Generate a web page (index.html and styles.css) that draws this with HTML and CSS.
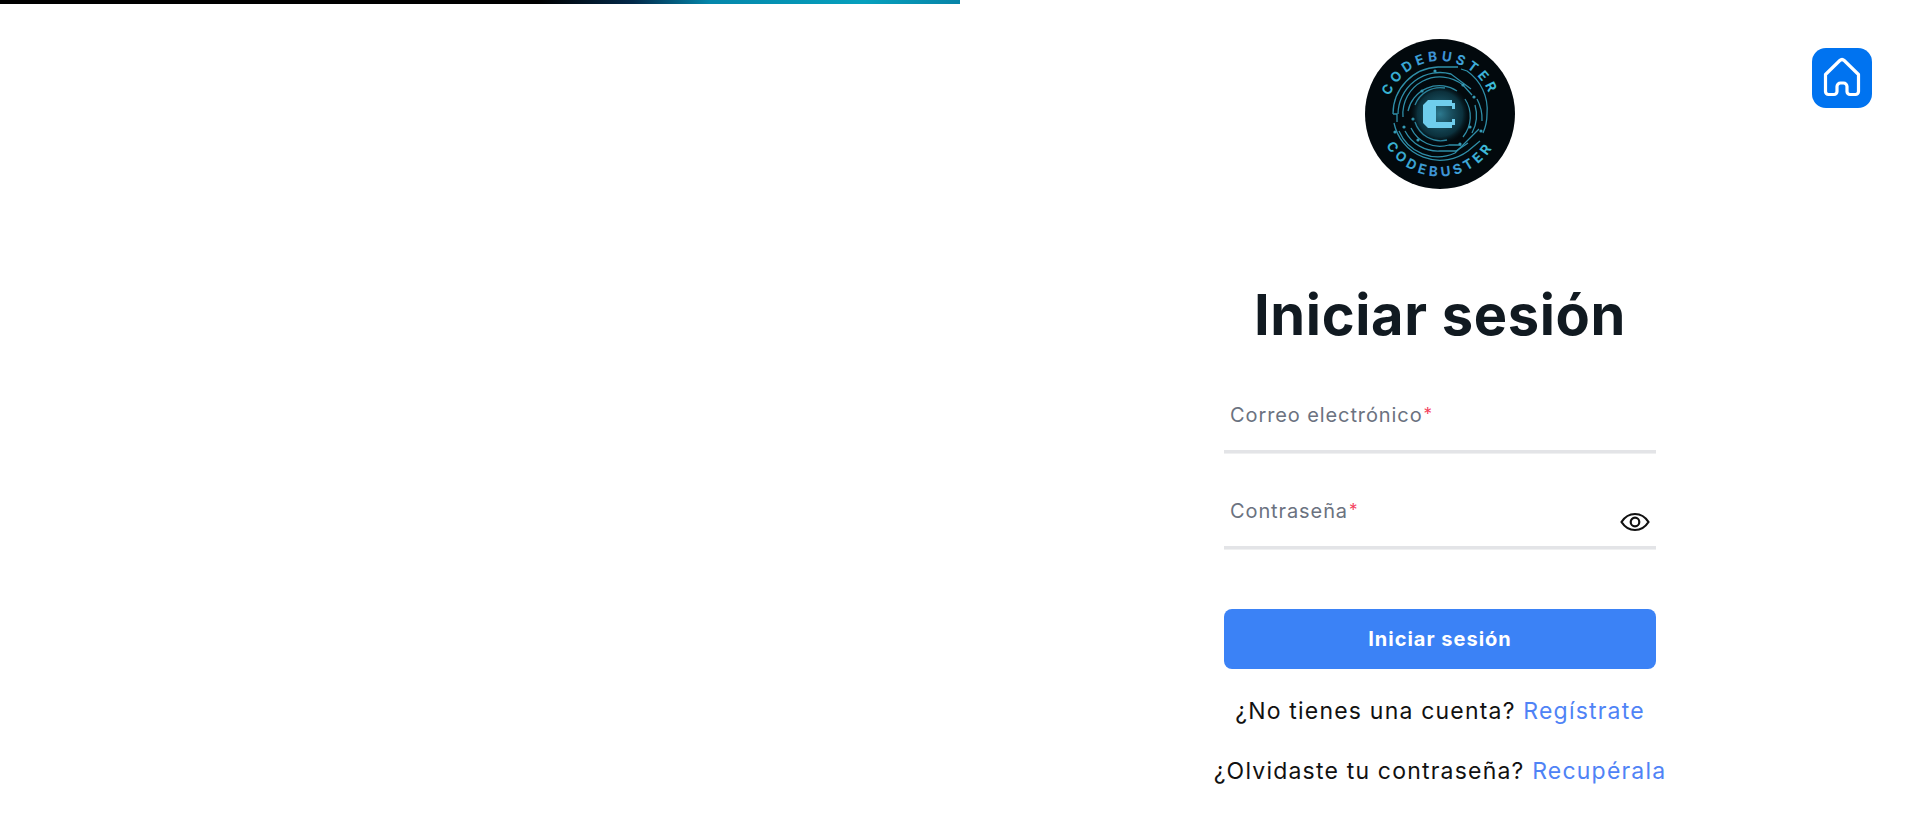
FILE: index.html
```html
<!DOCTYPE html>
<html lang="es">
<head>
<meta charset="utf-8">
<title>Iniciar sesión</title>
<link rel="stylesheet" href="styles.css">
</head>
<body>
<main class="page">
  <section class="left"><div class="progress"></div></section>
  <section class="right">
    <a class="home" href="#" aria-label="Inicio">
      <svg viewBox="0 0 60 60" width="60" height="60" fill="none" stroke="#fff" stroke-width="3.200" stroke-linejoin="round" stroke-linecap="round">
        <path d="M13.500 26.500 27.800 12.500a3.200 3.200 0 0 1 4.400 0L46.500 26.500V43.500a3 3 0 0 1-3 3H38a3 3 0 0 1-3-3V38.500a3.500 3.500 0 0 0-3.500-3.500h-3a3.500 3.500 0 0 0-3.500 3.500V43.500a3 3 0 0 1-3 3H16.500a3 3 0 0 1-3-3Z"/>
      </svg>
    </a>
    <svg class="logo" viewBox="0 0 150 150" width="150" height="150" role="img" aria-label="Codebuster">
      <defs>
        <linearGradient id="lg" x1="0" y1="0" x2="1" y2="0">
          <stop offset="0" stop-color="#36b9d2"/><stop offset=".5" stop-color="#3f8fd6"/><stop offset="1" stop-color="#3cc4da"/>
        </linearGradient>
        <radialGradient id="gl"><stop offset="0" stop-color="#49c4e6" stop-opacity=".6"/><stop offset=".75" stop-color="#1d7a94" stop-opacity=".35"/><stop offset="1" stop-color="#0a2a35" stop-opacity="0"/></radialGradient>
        <path id="arcT" d="M22 75a53 53 0 0 1 106 0"/>
        <path id="arcB" d="M12.500 75a62.500 62.500 0 0 0 125 0"/>
      </defs>
      <circle cx="75" cy="75" r="75" fill="#02090d"/>
      <g fill="none" stroke="#2f8ea8" stroke-width="1.300">
        <path d="M28 75a47 47 0 0 1 45-47h20M96 30l6 2a47 47 0 0 1 20 43 47 47 0 0 1-4 19"/>
        <path d="M33 75a42 42 0 0 1 53-40l20 15M112 60a42 42 0 0 1 5 22"/>
        <path d="M38 78a37 37 0 0 1 60-32l9 10M110 66a37 37 0 0 1-3 28"/>
        <path d="M43 72a32 32 0 0 1 49-20M100 60a32 32 0 0 1-2 38"/>
        <path d="M29 84a47 47 0 0 0 74 28l12-10"/>
        <path d="M34 92a42 42 0 0 0 56 22l24-24"/>
        <path d="M40 92a37 37 0 0 0 35 20h16l12-8"/>
        <path d="M46 89a32 32 0 0 0 38 17h12"/>
        <path d="M50 83a27 27 0 0 0 32 18"/>
        <path d="M50 66a27 27 0 0 1 30-17"/>
        <path d="M28 75h4v8"/>
      </g>
      <g fill="#359ab5">
        <circle cx="57" cy="52" r="1.600"/><circle cx="70" cy="32" r="1.600"/><circle cx="98" cy="46" r="1.600"/><circle cx="109" cy="58" r="1.600"/>
        <circle cx="39" cy="88" r="1.600"/><circle cx="48" cy="80" r="1.600"/><circle cx="53" cy="101" r="1.600"/><circle cx="95" cy="105" r="1.600"/><circle cx="116" cy="92" r="1.600"/><circle cx="105" cy="88" r="1.600"/><circle cx="30" cy="93" r="1.600"/>
      </g>
      <circle cx="75" cy="75" r="30" fill="url(#gl)"/>
      <path fill="#6fcdec" d="M63 61h24v3h3v6h-3v-3H71v16h16v-3h3v6h-3v3H63l-5-5V66Z"/>
      <g class="logo-text" fill="url(#lg)">
        <text><textPath href="#arcT" startOffset="50%" text-anchor="middle">CODEBUSTER</textPath></text>
        <text><textPath href="#arcB" startOffset="50%" text-anchor="middle">CODEBUSTER</textPath></text>
      </g>
    </svg>
    <h1 class="title">Iniciar sesión</h1>
    <form class="form">
      <div class="field">
        <label class="label">Correo electrónico<span class="req">*</span></label>
      </div>
      <div class="field">
        <label class="label">Contraseña<span class="req">*</span></label>
        <svg class="eye" viewBox="0 0 30 20" width="30" height="20" fill="none" stroke="#111" stroke-width="2.200">
          <path d="M1.500 10C5 4.500 9.500 2 15 2s10 2.500 13.500 8C25 15.500 20.500 18 15 18S5 15.500 1.500 10Z"/>
          <circle cx="15" cy="10" r="4.300"/>
        </svg>
      </div>
      <button class="submit" type="button">Iniciar sesión</button>
      <p class="note">¿No tienes una cuenta? <a href="#">Regístrate</a></p>
      <p class="note">¿Olvidaste tu contraseña? <a href="#">Recupérala</a></p>
    </form>
  </section>
</main>
</body>
</html>
```
FILE: styles.css
```css
* { box-sizing: border-box; }
html, body { margin: 0; height: 100%; background: #fff; }
body { font-family: Inter, "Liberation Sans", sans-serif; color: #111827; }
.page { display: grid; grid-template-columns: 960px 960px; height: 827px; overflow: hidden; }
.left { min-width: 0; }
.progress { width: 100%; height: 4px; background: linear-gradient(90deg, #000 0, #000 56%, #02294a 66%, #0487ab 74%, #06a0bd 90%, #0784a8 100%); }
.right { position: relative; display: flex; flex-direction: column; align-items: center; padding-top: 39px; }
.home { position: absolute; top: 48px; right: 48px; width: 60px; height: 60px; border-radius: 14px; background: #0073f0; display: block; }
.home svg { display: block; }
.logo { display: block; flex: none; }
.logo-text { font: 700 13.500px Inter, sans-serif; letter-spacing: 3.800px; }
.title { margin: 92px 0 0; font-size: 56px; line-height: 68px; font-weight: 700; color: #111a21; letter-spacing: .65px; }
.form { width: 432px; margin-top: 41px; display: flex; flex-direction: column; }
.field { position: relative; height: 63px; padding: 12px 6px 0; border-bottom: 3px solid #e3e4e7; box-shadow: 0 1px 0 #eff0f1; margin-bottom: 33px; }
.field:nth-of-type(2) { margin-bottom: 60px; }
.label { display: block; font-size: 20px; line-height: 26px; letter-spacing: .9px; color: #6b7280; }
.req { display: inline-block; font-size: 17px; line-height: 16px; letter-spacing: 0; color: #f43f5e; margin-left: 1px; vertical-align: 2px; }
.eye { position: absolute; right: 6px; bottom: 14px; }
.submit { height: 60px; border: 0; border-radius: 8px; background: #3b82f6; color: #fff; font: 700 20px Inter, sans-serif; letter-spacing: 1px; }
.note { margin: 0; align-self: center; text-align: center; font-size: 23px; line-height: 30px; letter-spacing: 1.200px; color: #111; white-space: nowrap; }
.submit + .note { margin-top: 27px; }
.note + .note { margin-top: 30px; }
.note a { color: #4f83f6; text-decoration: none; }
```
